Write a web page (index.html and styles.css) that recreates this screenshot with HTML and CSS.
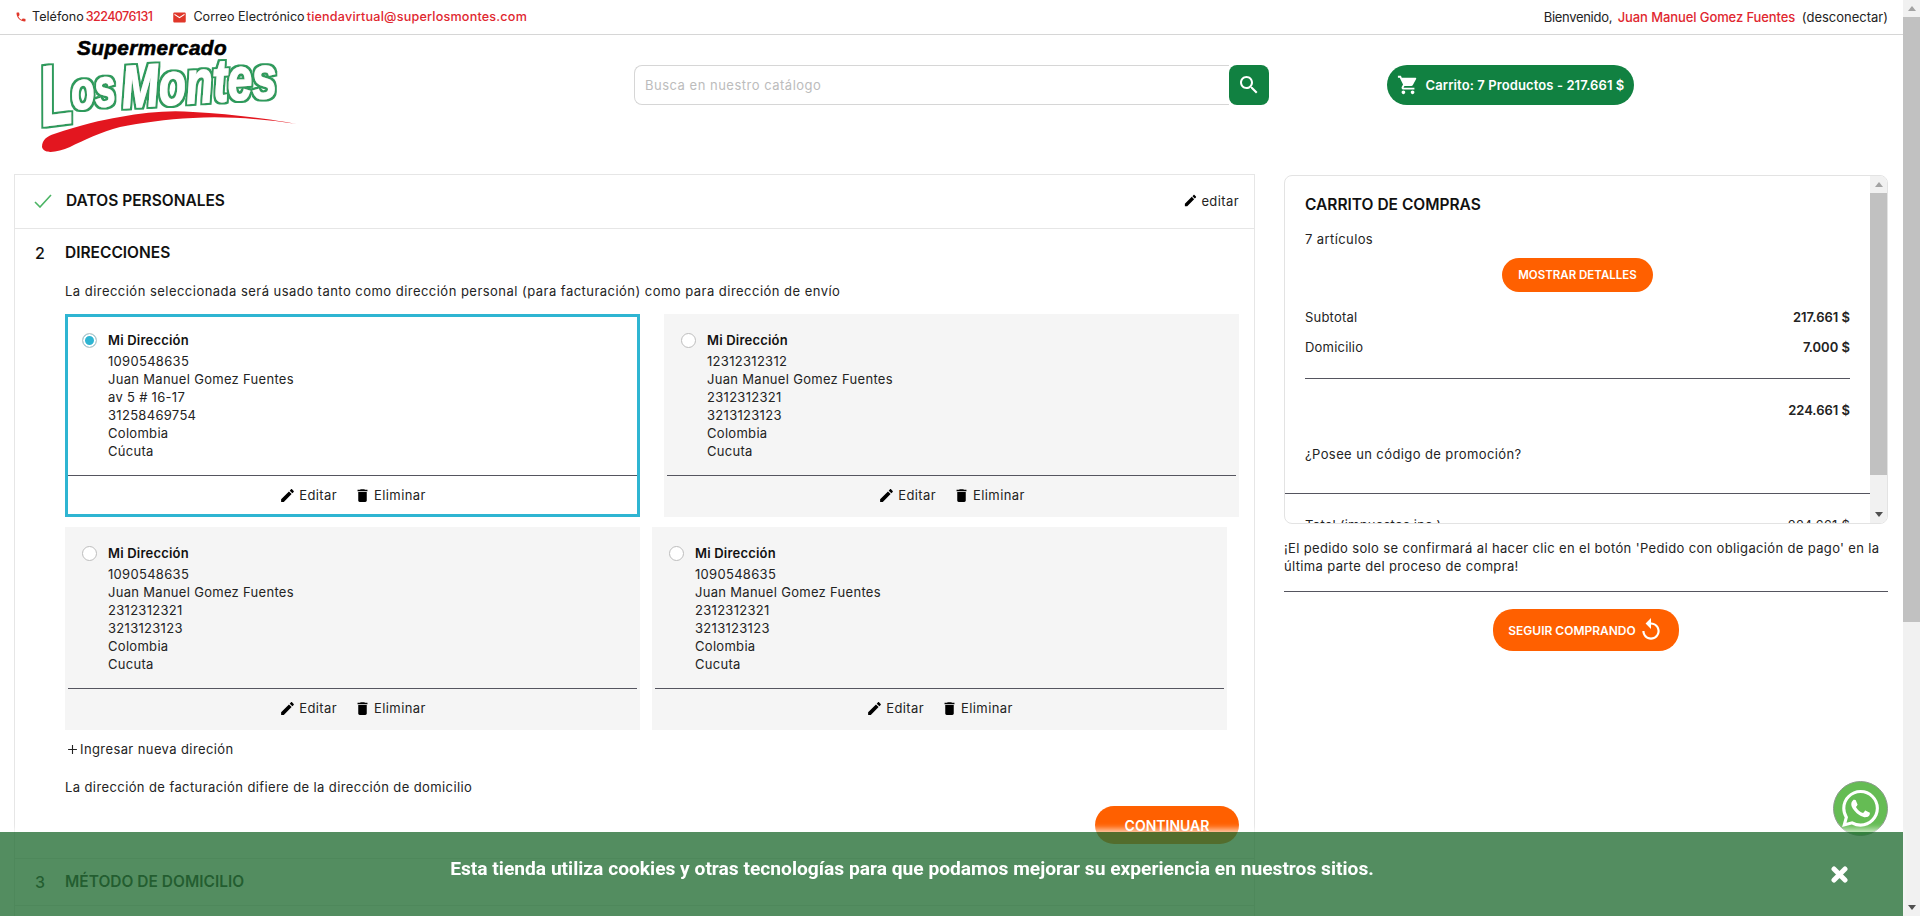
FILE: index.html
```html
<!DOCTYPE html>
<html lang="es">
<head>
    <meta charset="UTF-8">
    <title>Supermercado Los Montes</title>
    <link rel="stylesheet" href="styles.css">
</head>
<body>
    <div class="page">
        <div class="topbar">
            <div class="topbar-left">
                <span class="contact">
                    <svg class="icon-phone" viewBox="0 0 24 24"><path d="M6.62 10.79c1.44 2.83 3.76 5.14 6.59 6.59l2.2-2.2c.27-.27.67-.36 1.02-.24 1.12.37 2.33.57 3.57.57.55 0 1 .45 1 1V20c0 .55-.45 1-1 1-9.39 0-17-7.61-17-17 0-.55.45-1 1-1h3.5c.55 0 1 .45 1 1 0 1.25.2 2.45.57 3.57.11.35.03.74-.25 1.02l-2.2 2.2z"/></svg>
                    Teléfono <b class="phone-num">3224076131</b>
                </span>
                <span class="contact">
                    <svg class="icon-mail" viewBox="0 0 24 24"><path d="M20 4H4c-1.1 0-1.99.9-1.99 2L2 18c0 1.1.9 2 2 2h16c1.1 0 2-.9 2-2V6c0-1.1-.9-2-2-2zm0 4l-8 5-8-5V6l8 5 8-5v2z"/></svg>
                    Correo Electrónico <b class="mail-addr">tiendavirtual@superlosmontes.com</b>
                </span>
            </div>
            <div class="topbar-right"><span class="welcome">Bienvenido,</span> <b>Juan Manuel Gomez Fuentes</b> (desconectar)</div>
        </div>

        <header class="header">
            <svg class="logo" viewBox="0 0 262 122">
                <defs>
                    <filter id="logo-outline" x="-10%" y="-10%" width="120%" height="120%">
                        <feMorphology in="SourceAlpha" operator="dilate" radius="1.7" result="grown"/>
                        <feFlood flood-color="#2f9a5c"/>
                        <feComposite in2="grown" operator="in" result="edge"/>
                        <feMerge>
                            <feMergeNode in="edge"/>
                            <feMergeNode in="SourceGraphic"/>
                        </feMerge>
                    </filter>
                </defs>
                <text class="logo-super" x="41" y="20" textLength="150" lengthAdjust="spacingAndGlyphs">Supermercado</text>
                <path class="logo-swoosh" d="M6 112 C6 104 12 101 18 99 C45 90 65 85 84 82 C110 77 135 75 157 77 C195 79 235 84 261 89 C225 84 190 81 157 83 C130 84 105 88 84 92 C65 97 48 105 34 112 C22 117 8 120 6 112 Z"/>
                <g filter="url(#logo-outline)">
                    <text class="logo-name" font-size="85" transform="translate(7 91) rotate(-7) scale(.62 1)">L</text>
                    <text class="logo-name" font-size="53" transform="translate(37 75) rotate(-7) scale(.72 1)">os</text>
                    <text class="logo-name" font-size="60" transform="translate(87 73) rotate(-4) scale(.74 1)">Montes</text>
                </g>
            </svg>
            <form class="search">
                <input class="search-input" type="text" placeholder="Busca en nuestro catálogo">
                <button class="search-btn" type="button">
                    <svg viewBox="0 0 24 24"><path d="M15.5 14h-.79l-.28-.27C15.41 12.59 16 11.11 16 9.5 16 5.91 13.09 3 9.5 3S3 5.91 3 9.5 5.91 16 9.5 16c1.61 0 3.09-.59 4.23-1.57l.27.28v.79l5 4.99L20.49 19l-4.99-5zm-6 0C7.01 14 5 11.99 5 9.5S7.01 5 9.5 5 14 7.01 14 9.5 11.99 14 9.5 14z"/></svg>
                </button>
            </form>
            <a class="cart-btn">
                <svg viewBox="0 0 24 24"><path d="M7 18c-1.1 0-1.99.9-1.99 2S5.9 22 7 22s2-.9 2-2-.9-2-2-2zM1 2v2h2l3.6 7.59-1.35 2.45c-.16.28-.25.61-.25.96 0 1.1.9 2 2 2h12v-2H7.42c-.14 0-.25-.11-.25-.25l.03-.12.9-1.63h7.45c.75 0 1.41-.41 1.75-1.03l3.58-6.49c.08-.14.12-.31.12-.48 0-.55-.45-1-1-1H5.21l-.94-2H1zm16 16c-1.1 0-1.99.9-1.99 2s.89 2 1.99 2 2-.9 2-2-.9-2-2-2z"/></svg>
                Carrito: 7 Productos - 217.661 $
            </a>
        </header>

        <main class="main">
            <section class="steps">
                <div class="step-done">
                    <svg class="icon-check" viewBox="0 0 18 14"><path d="M1 8l5 5L17 1"/></svg>
                    <h2 class="step-title">DATOS PERSONALES</h2>
                    <a class="step-edit">
                        <svg viewBox="0 0 24 24"><path d="M3 17.25V21h3.75L17.81 9.94l-3.75-3.75L3 17.25zM20.71 7.04c.39-.39.39-1.02 0-1.41l-2.34-2.34c-.39-.39-1.02-.39-1.41 0l-1.83 1.83 3.75 3.75 1.83-1.83z"/></svg>
                        editar
                    </a>
                </div>

                <div class="step-current">
                    <div class="step-head">
                        <span class="step-num">2</span>
                        <h2 class="step-title">DIRECCIONES</h2>
                    </div>
                    <p class="step-note">La dirección seleccionada será usado tanto como dirección personal (para facturación) como para dirección de envío</p>

                    <div class="address-row gap-wide">
                        <div class="address selected">
                            <div class="address-body">
                                <span class="radio"></span>
                                <div>
                                    <h3 class="address-name">Mi Dirección</h3>
                                    <div class="address-lines">1090548635<br>Juan Manuel Gomez Fuentes<br>av 5 # 16-17<br>31258469754<br>Colombia<br>Cúcuta</div>
                                </div>
                            </div>
                            <div class="address-actions">
                                <a><svg viewBox="0 0 24 24"><path d="M3 17.25V21h3.75L17.81 9.94l-3.75-3.75L3 17.25zM20.71 7.04c.39-.39.39-1.02 0-1.41l-2.34-2.34c-.39-.39-1.02-.39-1.41 0l-1.83 1.83 3.75 3.75 1.83-1.83z"/></svg>Editar</a>
                                <a><svg viewBox="0 0 24 24"><path d="M6 19c0 1.1.9 2 2 2h8c1.1 0 2-.9 2-2V7H6v12zM19 4h-3.5l-1-1h-5l-1 1H5v2h14V4z"/></svg>Eliminar</a>
                            </div>
                        </div>
                        <div class="address">
                            <div class="address-body">
                                <span class="radio"></span>
                                <div>
                                    <h3 class="address-name">Mi Dirección</h3>
                                    <div class="address-lines">12312312312<br>Juan Manuel Gomez Fuentes<br>2312312321<br>3213123123<br>Colombia<br>Cucuta</div>
                                </div>
                            </div>
                            <div class="address-actions">
                                <a><svg viewBox="0 0 24 24"><path d="M3 17.25V21h3.75L17.81 9.94l-3.75-3.75L3 17.25zM20.71 7.04c.39-.39.39-1.02 0-1.41l-2.34-2.34c-.39-.39-1.02-.39-1.41 0l-1.83 1.83 3.75 3.75 1.83-1.83z"/></svg>Editar</a>
                                <a><svg viewBox="0 0 24 24"><path d="M6 19c0 1.1.9 2 2 2h8c1.1 0 2-.9 2-2V7H6v12zM19 4h-3.5l-1-1h-5l-1 1H5v2h14V4z"/></svg>Eliminar</a>
                            </div>
                        </div>
                    </div>

                    <div class="address-row">
                        <div class="address">
                            <div class="address-body">
                                <span class="radio"></span>
                                <div>
                                    <h3 class="address-name">Mi Dirección</h3>
                                    <div class="address-lines">1090548635<br>Juan Manuel Gomez Fuentes<br>2312312321<br>3213123123<br>Colombia<br>Cucuta</div>
                                </div>
                            </div>
                            <div class="address-actions">
                                <a><svg viewBox="0 0 24 24"><path d="M3 17.25V21h3.75L17.81 9.94l-3.75-3.75L3 17.25zM20.71 7.04c.39-.39.39-1.02 0-1.41l-2.34-2.34c-.39-.39-1.02-.39-1.41 0l-1.83 1.83 3.75 3.75 1.83-1.83z"/></svg>Editar</a>
                                <a><svg viewBox="0 0 24 24"><path d="M6 19c0 1.1.9 2 2 2h8c1.1 0 2-.9 2-2V7H6v12zM19 4h-3.5l-1-1h-5l-1 1H5v2h14V4z"/></svg>Eliminar</a>
                            </div>
                        </div>
                        <div class="address">
                            <div class="address-body">
                                <span class="radio"></span>
                                <div>
                                    <h3 class="address-name">Mi Dirección</h3>
                                    <div class="address-lines">1090548635<br>Juan Manuel Gomez Fuentes<br>2312312321<br>3213123123<br>Colombia<br>Cucuta</div>
                                </div>
                            </div>
                            <div class="address-actions">
                                <a><svg viewBox="0 0 24 24"><path d="M3 17.25V21h3.75L17.81 9.94l-3.75-3.75L3 17.25zM20.71 7.04c.39-.39.39-1.02 0-1.41l-2.34-2.34c-.39-.39-1.02-.39-1.41 0l-1.83 1.83 3.75 3.75 1.83-1.83z"/></svg>Editar</a>
                                <a><svg viewBox="0 0 24 24"><path d="M6 19c0 1.1.9 2 2 2h8c1.1 0 2-.9 2-2V7H6v12zM19 4h-3.5l-1-1h-5l-1 1H5v2h14V4z"/></svg>Eliminar</a>
                            </div>
                        </div>
                    </div>

                    <a class="new-address"><svg viewBox="0 0 10 10"><path d="M5 1v8M1 5h8"/></svg>Ingresar nueva direción</a>
                    <p class="billing-note">La dirección de facturación difiere de la dirección de domicilio</p>
                    <div class="step-footer">
                        <button class="btn btn-continue" type="button">CONTINUAR</button>
                    </div>
                </div>

                <div class="step-pending">
                    <span class="step-num">3</span>
                    <h2 class="step-title">MÉTODO DE DOMICILIO</h2>
                </div>
                <div class="step-pending"></div>
            </section>

            <aside class="side">
                <div class="summary">
                    <div class="summary-body">
                        <div class="summary-top">
                            <h2 class="summary-title">CARRITO DE COMPRAS</h2>
                            <div class="summary-count">7 artículos</div>
                            <div class="summary-center">
                                <button class="btn btn-details" type="button">MOSTRAR DETALLES</button>
                            </div>
                            <div class="summary-line summary-first"><span>Subtotal</span><b>217.661 $</b></div>
                            <div class="summary-line"><span>Domicilio</span><b>7.000 $</b></div>
                            <hr class="rule rule-sub">
                            <div class="summary-line"><span></span><b>224.661 $</b></div>
                            <div class="summary-promo">¿Posee un código de promoción?</div>
                        </div>
                        <hr class="rule">
                        <div class="summary-line summary-total"><span>Total (impuestos inc.)</span><span>224.661 $</span></div>
                    </div>
                    <div class="scrollbar">
                        <span class="arrow-up"></span>
                        <span class="thumb thumb-summary"></span>
                        <span class="track"></span>
                        <span class="arrow-down"></span>
                    </div>
                </div>
                <p class="side-note">¡El pedido solo se confirmará al hacer clic en el botón 'Pedido con obligación de pago' en la última parte del proceso de compra!</p>
                <hr class="rule">
                <div class="summary-center">
                    <button class="btn btn-keep" type="button">SEGUIR COMPRANDO
                        <svg viewBox="0 0 24 24"><path d="M12 5V1L7 6l5 5V7c3.31 0 6 2.69 6 6s-2.69 6-6 6-6-2.69-6-6H4c0 4.42 3.58 8 8 8s8-3.58 8-8-3.58-8-8-8z"/></svg>
                    </button>
                </div>
            </aside>
        </main>
    </div>

    <div class="scrollbar page-scrollbar">
        <span class="arrow-up"></span>
        <span class="thumb thumb-page"></span>
        <span class="track"></span>
        <span class="arrow-down"></span>
    </div>

    <a class="whatsapp">
        <svg viewBox="0 0 24 24"><path d="M17.472 14.382c-.297-.149-1.758-.867-2.03-.967-.273-.099-.471-.148-.67.15-.197.297-.767.966-.94 1.164-.173.199-.347.223-.644.075-.297-.15-1.255-.463-2.39-1.475-.883-.788-1.48-1.761-1.653-2.059-.173-.297-.018-.458.13-.606.134-.133.298-.347.446-.52.149-.174.198-.298.298-.497.099-.198.05-.371-.025-.52-.075-.149-.669-1.612-.916-2.207-.242-.579-.487-.5-.669-.51-.173-.008-.371-.01-.57-.01-.198 0-.52.074-.792.372-.272.297-1.04 1.016-1.04 2.479 0 1.462 1.065 2.875 1.213 3.074.149.198 2.096 3.2 5.077 4.487.709.306 1.262.489 1.694.625.712.227 1.36.195 1.871.118.571-.085 1.758-.719 2.006-1.413.248-.694.248-1.289.173-1.413-.074-.124-.272-.198-.57-.347m-5.421 7.403h-.004a9.87 9.87 0 01-5.031-1.378l-.361-.214-3.741.982.998-3.648-.235-.374a9.86 9.86 0 01-1.51-5.26c.001-5.45 4.436-9.884 9.888-9.884 2.64 0 5.122 1.03 6.988 2.898a9.825 9.825 0 012.893 6.994c-.003 5.45-4.437 9.884-9.885 9.884m8.413-18.297A11.815 11.815 0 0012.05 0C5.495 0 .16 5.335.157 11.892c0 2.096.547 4.142 1.588 5.945L.057 24l6.305-1.654a11.882 11.882 0 005.683 1.448h.005c6.554 0 11.89-5.335 11.893-11.893a11.821 11.821 0 00-3.48-8.413z"/></svg>
    </a>

    <div class="cookie-bar">
        <span class="cookie-text">Esta tienda utiliza cookies y otras tecnologías para que podamos mejorar su experiencia en nuestros sitios.</span>
        <svg class="cookie-close" viewBox="0 0 17 17"><path d="M3 3l11 11M14 3L3 14"/></svg>
    </div>
</body>
</html>
```

FILE: styles.css
```css
* {
    box-sizing: border-box;
}
body {
    margin: 0;
    height: 916px;
    overflow: hidden;
    display: flex;
    font-family: Inter, "Noto Sans", sans-serif;
    font-size: 13px;
    line-height: 18px;
    letter-spacing: .4px;
    color: #232323;
    background-color: #fff;
}
h2, h3, p {
    margin: 0;
}
b {
    font-weight: 500;
}
.page {
    flex: 1;
    min-width: 0;
}

/* barra superior */
.topbar {
    height: 35px;
    padding: 0 15px;
    display: flex;
    justify-content: space-between;
    align-items: center;
    border-bottom: 1px solid #d6d6d6;
    letter-spacing: 0;
}
.topbar-left {
    display: flex;
    gap: 20px;
    font-size: 12.6px;
}
.contact {
    display: flex;
    align-items: center;
    gap: 2px;
}
.contact b, .topbar-right b {
    color: #e0272f;
}
.contact svg {
    fill: #e0372a;
}
.phone-num {
    letter-spacing: -.6px;
}
.mail-addr {
    letter-spacing: .2px;
}
.icon-phone {
    width: 12px;
    height: 12px;
    margin-right: 3px;
}
.icon-mail {
    width: 15px;
    height: 15px;
    margin-right: 4px;
}
.welcome {
    letter-spacing: -.3px;
}
.topbar-right b {
    margin: 0 3px 0 2px;
    letter-spacing: -.1px;
}

/* cabecera */
.header {
    height: 139px;
    padding-left: 36px;
    display: flex;
    align-items: flex-start;
}
.logo {
    width: 262px;
    height: 122px;
    display: block;
}
.logo-super {
    font-family: "Liberation Sans", sans-serif;
    font-weight: bold;
    font-style: italic;
    font-size: 21px;
    fill: #000;
    stroke: #000;
    stroke-width: .6px;
}
.logo-name {
    font-family: "Liberation Sans", sans-serif;
    font-weight: bold;
    font-style: italic;
    letter-spacing: 0;
    fill: #fff;
    stroke: #fff;
    stroke-width: 1.5px;
}
.logo-swoosh {
    fill: #e3161f;
}
.search {
    margin: 30px 0 0 336px;
    width: 635px;
    height: 40px;
    display: flex;
}
.search-input {
    flex: 1;
    min-width: 0;
    height: 40px;
    padding: 0 10px;
    border: 1px solid #d6d6d6;
    border-right: none;
    border-radius: 8px 0 0 8px;
    font-family: inherit;
    font-size: 13px;
    letter-spacing: .5px;
    outline: none;
}
.search-input::placeholder {
    color: #bcbcbc;
}
.search-btn {
    width: 40px;
    height: 40px;
    padding: 0;
    border: none;
    border-radius: 8px;
    background-color: #118141;
    display: flex;
    align-items: center;
    justify-content: center;
}
.search-btn svg {
    width: 24px;
    height: 24px;
    fill: #fff;
}
.cart-btn {
    margin: 30px 0 0 118px;
    width: 247px;
    height: 40px;
    border-radius: 20px;
    background-color: #118141;
    color: #fff;
    font-size: 13px;
    letter-spacing: .1px;
    font-weight: 600;
    display: flex;
    align-items: center;
    justify-content: center;
    gap: 7px;
}
.cart-btn svg {
    width: 22px;
    height: 22px;
    fill: #fff;
}

/* contenido */
.main {
    padding: 0 15px 0 14px;
    display: flex;
    gap: 29px;
    align-items: flex-start;
}
.steps {
    width: 1241px;
    border: 1px solid #e6e6e6;
    border-bottom: none;
    background-color: #fff;
}
.step-title {
    font-size: 15.5px;
    line-height: 22px;
    font-weight: 600;
    letter-spacing: 0;
    color: #111;
}
.step-num {
    width: 30px;
    padding-left: 20px;
    box-sizing: content-box;
    font-size: 16px;
    font-weight: 500;
    color: #111;
}
.step-done {
    height: 54px;
    padding: 0 15px 2px 19px;
    display: flex;
    align-items: center;
    border-bottom: 1px solid #e6e6e6;
}
.icon-check {
    width: 18px;
    height: 14px;
    margin-right: 14px;
    fill: none;
    stroke: #4bb464;
    stroke-width: 1.6;
}
.step-edit {
    margin-left: auto;
    display: flex;
    align-items: center;
    gap: 3px;
    color: #232323;
}
.step-edit svg {
    width: 15px;
    height: 15px;
}
.step-current {
    padding: 13px 15px 14px 0;
    border-bottom: 1px solid #e6e6e6;
}
.step-head {
    display: flex;
    align-items: center;
}
.step-note {
    margin: 18px 0 14px 50px;
    letter-spacing: .47px;
}
.address-row {
    margin-left: 50px;
    margin-bottom: 10px;
    display: flex;
    gap: 12px;
}
.gap-wide {
    gap: 24px;
}
.address {
    width: 575px;
    height: 203px;
    border: 3px solid #f5f5f5;
    background-color: #f5f5f5;
}
.address.selected {
    border-color: #2fb5d2;
    background-color: #fff;
}
.address-body {
    height: 159px;
    padding: 14px 0 0 14px;
    display: flex;
    gap: 11px;
    border-bottom: 1px solid #55555f;
}
.address-name {
    font-size: 13px;
    line-height: 18px;
    font-weight: 600;
    letter-spacing: .2px;
    color: #111;
    margin-bottom: 3px;
}
.address-lines {
    letter-spacing: .3px;
}
.radio {
    width: 15px;
    height: 15px;
    margin-top: 2px;
    border: 1px solid #bdbdbd;
    border-radius: 50%;
    background-color: #fff;
    flex-shrink: 0;
}
.selected .radio {
    border-color: #c9c9c9;
    box-shadow: inset 0 0 0 2px #fff;
    background-color: #2fb5d2;
}
.address-actions {
    height: 38px;
    display: flex;
    justify-content: center;
    align-items: center;
    gap: 17px;
}
.address-actions a {
    display: flex;
    align-items: center;
    gap: 3px;
}
.address-actions svg {
    width: 17px;
    height: 17px;
}
.new-address {
    display: flex;
    align-items: center;
    margin-left: 52px;
    gap: 2px;
}
.new-address svg {
    width: 11px;
    height: 11px;
    fill: none;
    stroke: #222;
    stroke-width: 1;
}
.billing-note {
    margin: 20px 0 10px 50px;
}
.step-footer {
    display: flex;
    justify-content: flex-end;
}
.btn {
    border: none;
    border-radius: 20px;
    background-color: #ff6000;
    color: #fff;
    font-family: inherit;
    font-weight: 600;
    letter-spacing: 0;
}
.btn-continue {
    width: 144px;
    height: 38px;
    font-size: 14px;
}
.step-pending {
    height: 47px;
    padding: 0;
    display: flex;
    align-items: center;
    border-bottom: 1px solid #e6e6e6;
}

/* resumen */
.side {
    width: 604px;
}
.summary {
    height: 349px;
    margin-top: 1px;
    border: 1px solid #e3e3e3;
    border-radius: 8px;
    overflow: hidden;
    display: flex;
}
.summary-body {
    flex: 1;
    min-width: 0;
    overflow: hidden;
}
.summary-top {
    padding: 18px 20px 0;
}
.summary-title {
    font-size: 15.5px;
    line-height: 22px;
    font-weight: 600;
    letter-spacing: 0;
    color: #111;
}
.summary-count {
    margin-top: 14px;
}
.summary-center {
    display: flex;
    justify-content: center;
}
.btn-details {
    margin-top: 10px;
    width: 151px;
    height: 34px;
    font-size: 11.5px;
}
.summary-line {
    display: flex;
    justify-content: space-between;
    height: 18px;
    margin-top: 12px;
    letter-spacing: .2px;
}
.summary-line b {
    font-weight: 600;
    letter-spacing: 0;
}
.summary-first {
    margin-top: 16px;
}
.rule {
    margin: 0;
    border: none;
    border-top: 1px solid #55555f;
}
.rule-sub {
    margin: 22px 0 22px;
}
.summary-promo {
    margin-top: 26px;
    padding-bottom: 30px;
}
.summary-total {
    margin: 22px 20px 0;
}
.side-note {
    margin: 15px 0 16px;
    letter-spacing: .35px;
}
.btn-keep {
    margin-top: 17px;
    width: 186px;
    height: 42px;
    font-size: 12px;
    display: flex;
    align-items: center;
    justify-content: center;
    gap: 2px;
}
.btn-keep svg {
    width: 26px;
    height: 26px;
    fill: #fff;
}

/* barras de desplazamiento */
.scrollbar {
    width: 17px;
    flex-shrink: 0;
    background-color: #f1f1f1;
    display: flex;
    flex-direction: column;
    align-items: center;
}
.page-scrollbar {
    height: 916px;
}
.arrow-up, .arrow-down {
    height: 17px;
    flex-shrink: 0;
    width: 0;
    border-left: 4px solid transparent;
    border-right: 4px solid transparent;
}
.arrow-up {
    border-bottom: 5px solid #a3a3a3;
    border-top: 6px solid transparent;
    height: 11px;
    margin-bottom: 6px;
}
.arrow-down {
    border-top: 5px solid #505050;
    border-bottom: 6px solid transparent;
    height: 11px;
    margin-top: 6px;
}
.thumb {
    width: 100%;
    background-color: #c1c1c1;
    flex-shrink: 0;
}
.thumb-page {
    height: 605px;
}
.thumb-summary {
    height: 282px;
}
.track {
    flex: 1;
}

/* flotantes */
.whatsapp {
    position: fixed;
    left: 1833px;
    top: 781px;
    width: 55px;
    height: 55px;
    border-radius: 50%;
    border: 1px solid #8a9a8a;
    background-color: #65bc54;
    display: flex;
    align-items: center;
    justify-content: center;
}
.whatsapp svg {
    width: 37px;
    height: 37px;
    fill: #fff;
}
.cookie-bar {
    position: fixed;
    left: 0;
    bottom: 0;
    width: 1903px;
    height: 84px;
    padding-right: 55px;
    display: flex;
    align-items: center;
    background-color: rgba(40, 112, 56, .8);
    box-shadow: 0 -3px 6px rgba(255, 255, 255, .7);
}
.cookie-text {
    width: 1824px;
    margin-bottom: 10px;
    text-align: center;
    font-family: Roboto, "Liberation Sans", sans-serif;
    font-size: 19.2px;
    font-weight: 700;
    letter-spacing: 0;
    color: #fff;
}
.cookie-close {
    width: 17px;
    height: 17px;
    margin-left: 7px;
    fill: none;
    stroke: #fff;
    stroke-width: 5;
    stroke-linecap: round;
}
```
